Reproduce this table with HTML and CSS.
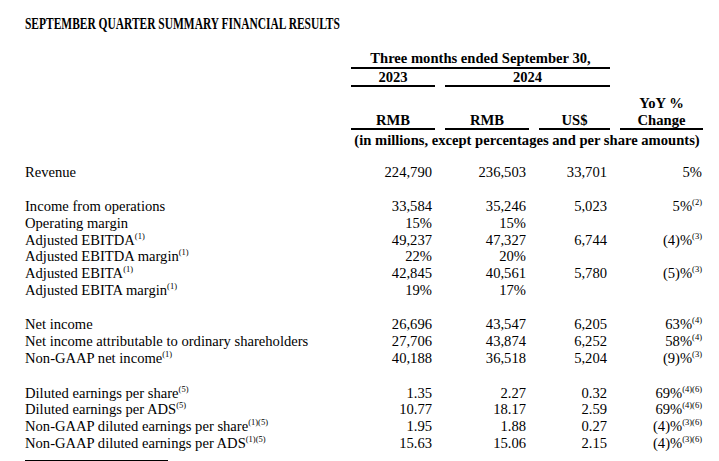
FILE: index.html
```html
<!DOCTYPE html>
<html>
<head>
<meta charset="utf-8">
<link rel="stylesheet" href="styles.css">
</head>
<body>
<div class="page">
  <h1 class="title">SEPTEMBER QUARTER SUMMARY FINANCIAL RESULTS</h1>
  <div class="fin">
    <div class="hd row1 span3 ul">Three months ended September 30,</div>
    <div class="hd row2 c2 ul">2023</div>
    <div class="hd row2 span2b ul">2024</div>
    <div class="hd row3 c5">YoY %</div>
    <div class="hd row4 c2 ul">RMB</div>
    <div class="hd row4 c3 ul">RMB</div>
    <div class="hd row4 c4 ul">US$</div>
    <div class="hd row4 c5 ul">Change</div>
    <div class="hd row5 span4 units">(in millions, except percentages and per share amounts)</div>

    <div class="gap g0"></div>
    <div class="lbl">Revenue</div><div class="num">224,790</div><div class="num">236,503</div><div class="num">33,701</div><div class="num pct">5%</div>

    <div class="gap"></div>
    <div class="lbl">Income from operations</div><div class="num">33,584</div><div class="num">35,246</div><div class="num">5,023</div><div class="num pct">5%<sup>(2)</sup></div>
    <div class="lbl">Operating margin</div><div class="num">15%</div><div class="num">15%</div><div class="num"></div><div class="num pct"></div>
    <div class="lbl">Adjusted EBITDA<sup>(1)</sup></div><div class="num">49,237</div><div class="num">47,327</div><div class="num">6,744</div><div class="num pct">(4)%<sup>(3)</sup></div>
    <div class="lbl">Adjusted EBITDA margin<sup>(1)</sup></div><div class="num">22%</div><div class="num">20%</div><div class="num"></div><div class="num pct"></div>
    <div class="lbl">Adjusted EBITA<sup>(1)</sup></div><div class="num">42,845</div><div class="num">40,561</div><div class="num">5,780</div><div class="num pct">(5)%<sup>(3)</sup></div>
    <div class="lbl">Adjusted EBITA margin<sup>(1)</sup></div><div class="num">19%</div><div class="num">17%</div><div class="num"></div><div class="num pct"></div>

    <div class="gap"></div>
    <div class="lbl">Net income</div><div class="num">26,696</div><div class="num">43,547</div><div class="num">6,205</div><div class="num pct">63%<sup>(4)</sup></div>
    <div class="lbl">Net income attributable to ordinary shareholders</div><div class="num">27,706</div><div class="num">43,874</div><div class="num">6,252</div><div class="num pct">58%<sup>(4)</sup></div>
    <div class="lbl">Non-GAAP net income<sup>(1)</sup></div><div class="num">40,188</div><div class="num">36,518</div><div class="num">5,204</div><div class="num pct">(9)%<sup>(3)</sup></div>

    <div class="gap"></div>
    <div class="lbl">Diluted earnings per share<sup>(5)</sup></div><div class="num">1.35</div><div class="num">2.27</div><div class="num">0.32</div><div class="num pct">69%<sup>(4)(6)</sup></div>
    <div class="lbl">Diluted earnings per ADS<sup>(5)</sup></div><div class="num">10.77</div><div class="num">18.17</div><div class="num">2.59</div><div class="num pct">69%<sup>(4)(6)</sup></div>
    <div class="lbl">Non-GAAP diluted earnings per share<sup>(1)(5)</sup></div><div class="num">1.95</div><div class="num">1.88</div><div class="num">0.27</div><div class="num pct">(4)%<sup>(3)(6)</sup></div>
    <div class="lbl">Non-GAAP diluted earnings per ADS<sup>(1)(5)</sup></div><div class="num">15.63</div><div class="num">15.06</div><div class="num">2.15</div><div class="num pct">(4)%<sup>(3)(6)</sup></div>
  </div>
  <div class="rule"></div>
</div>
</body>
</html>
```

FILE: styles.css
```css
html, body {
  margin: 0;
  padding: 0;
  background: #ffffff;
}
.page {
  padding: 11px 0 0 25px;
  font-family: "Liberation Serif", "Times New Roman", serif;
  color: #000;
}
.title {
  margin: 0;
  font-size: 17.5px;
  line-height: 24px;
  font-weight: bold;
  white-space: nowrap;
  transform: scaleX(0.655);
  transform-origin: left center;
}
.fin {
  margin-top: 15px;
  display: grid;
  grid-template-columns: 316px 84px 84px 71px 83px;
  column-gap: 10px;
  font-size: 14.6px;
  line-height: 16.7px;
}
.hd {
  font-weight: bold;
  text-align: center;
  white-space: nowrap;
}
.ul {
  border-bottom: 2px solid #000;
}
.row1 { grid-row: 1; }
.row2 { grid-row: 2; }
.row3 { grid-row: 3; margin-top: 7.5px; }
.row4 { grid-row: 4; }
.row5 { grid-row: 5; }
.span3 { grid-column: 2 / 5; }
.c2 { grid-column: 2; }
.c3 { grid-column: 3; }
.c4 { grid-column: 4; }
.c5 { grid-column: 5; }
.span2b { grid-column: 3 / 5; }
.span4 { grid-column: 2 / 6; }
.units { padding-top: 1.5px; }
.gap { grid-column: 1 / -1; height: 18px; }
.g0 { height: 15px; }
.lbl { grid-column: 1; white-space: nowrap; }
.num { text-align: right; padding-right: 3px; white-space: nowrap; }
.pct { padding-right: 1px; }
sup {
  font-size: 8.5px;
  line-height: 0;
  vertical-align: 6.5px;
}
.rule {
  width: 143px;
  margin-top: 9px;
  border-top: 1px solid #000;
}
```
